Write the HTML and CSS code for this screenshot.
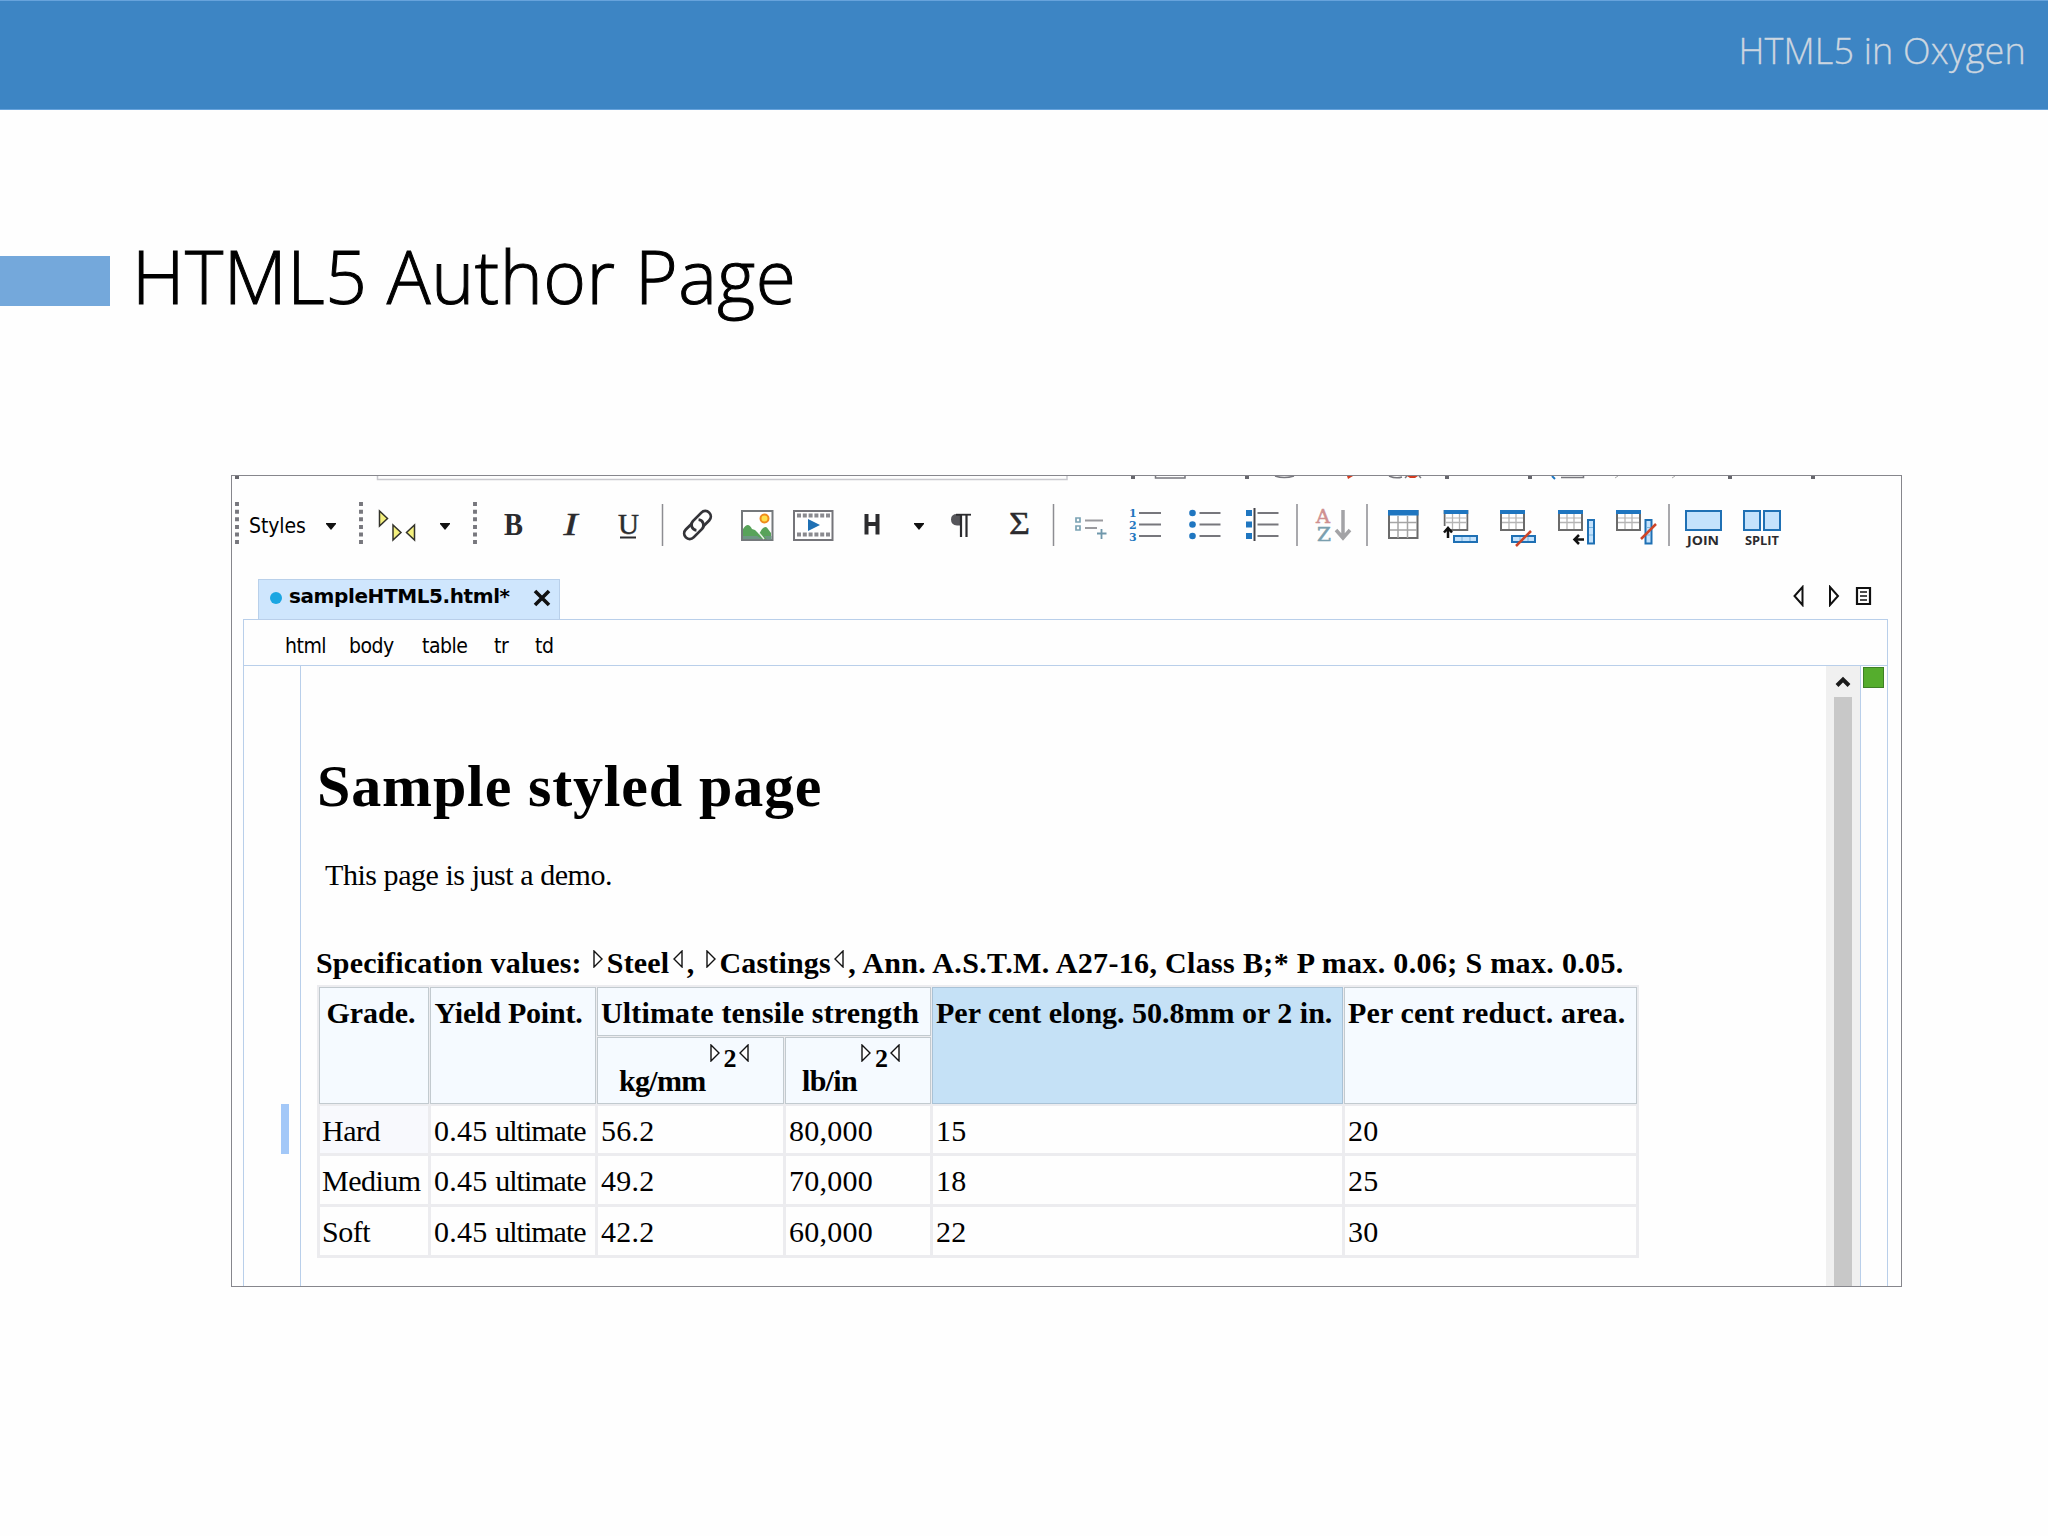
FILE: index.html
```html
<!DOCTYPE html>
<html lang="en">
<head>
    <meta charset="UTF-8">
    <title>HTML5 Author Page</title>
    <link rel="stylesheet" href="styles.css">
</head>
<body>

<header><span>HTML5 in Oxygen</span></header>

<div class="title">
    <div class="accent"></div>
    <h1>HTML5 Author Page</h1>
</div>

<!-- Symbols shared by the toolbar and the document -->
<svg class="defs">
    <symbol id="grip" viewBox="0 0 4 44"><path d="M0 2h4M0 10h4M0 17.700h4M0 25.500h4M0 33.200h4M0 41h4" stroke="#77777d" stroke-width="4"/></symbol>
    <symbol id="caret" viewBox="0 0 10 7"><path d="M0 0h10v1L5 7 0 1z" fill="#111"/></symbol>
    <symbol id="grid" viewBox="0 0 25 21">
        <path d="M1 1h23v19H1z" fill="#fff" stroke="#6b6b6b" stroke-width="2"/>
        <path d="M2 12.500h21M9 4v15M16 4v15" stroke="#b5b5b5" stroke-width="1.300" fill="none"/>
        <path d="M2 8h21" stroke="#b5b5b5"/>
        <path d="M0 0h25v4H0z" fill="#1f76c0"/>
    </symbol>
    <symbol id="open" viewBox="0 0 10 18"><path d="M1 1v16L9 9z" fill="#fff" stroke="#111" stroke-width="1.400"/></symbol>
    <symbol id="close" viewBox="0 0 10 18"><path d="M9 1v16L1 9z" fill="#fff" stroke="#111" stroke-width="1.400"/></symbol>
</svg>

<div class="window">
    <!-- Bottom edge of the toolbar row above -->
    <svg class="upper-row" width="1669" height="6" viewBox="232 476 1669 6">
        <path d="M377.500 476v3.500H1067V476" fill="none" stroke="#c9c9ce" stroke-width="1.500"/>
        <path d="M235 476h4v3h-4zM1131 476h4v3h-4zM1245 476h4v3h-4zM1445 476h4v3h-4zM1528 476h4v3h-4zM1728 476h4v3h-4zM1811 476h4v3h-4z" fill="#66666c"/>
        <path d="M1155.500 476v2H1185v-2M1275 476q9 3 19 0M1389 476q7 3 13 1M1561 477.500h22.500V476M1405 478l2-2M1419 476l2 2" fill="none" stroke="#77777d" stroke-width="1.500"/>
        <path d="M1347 476h6l-5 3zM1407 476h11l-3 2h-5z" fill="#d23c20"/>
        <path d="M1552 476l3 3" stroke="#1f76c0" stroke-width="2"/>
        <path d="M1615 478l3-2M1672 478l3-2" stroke="#aaa"/>
    </svg>

    <div class="toolbar">
        <svg width="12" height="60" viewBox="232 496 12 60"><use href="#grip" x="235" y="502" width="4" height="43"/></svg>
        <span class="styles">Styles</span>
        <svg width="36" height="60" viewBox="316 496 36 60"><use href="#caret" x="326" y="523" width="10" height="7"/></svg>
        <svg width="18" height="60" viewBox="352 496 18 60"><use href="#grip" x="359" y="502" width="4" height="43"/></svg>
        <svg width="60" height="60" viewBox="370 496 60 60">
            <path d="M379.500 511v15l8-7.500zM393 525v15l8-7.500zM414.500 525v15l-8-7.500z" fill="#f4f07e" stroke="#33332b" stroke-width="1.500"/>
        </svg>
        <svg width="36" height="60" viewBox="430 496 36 60"><use href="#caret" x="440" y="523" width="10" height="7"/></svg>
        <svg width="24" height="60" viewBox="466 496 24 60"><use href="#grip" x="473" y="502" width="4" height="43"/></svg>
        <svg width="50" height="60" viewBox="490 496 50 60"><text class="serif bold" x="504" y="534.500" font-size="31" textLength="19" lengthAdjust="spacingAndGlyphs">B</text></svg>
        <svg width="60" height="60" viewBox="540 496 60 60"><text class="serif italic" x="563.500" y="534.500" font-size="31" textLength="14" lengthAdjust="spacingAndGlyphs" stroke="#2b2b2e" stroke-width=".5">I</text></svg>
        <svg width="55" height="60" viewBox="600 496 55 60">
            <text class="serif" x="618" y="533.500" font-size="29" stroke="#2b2b2e" stroke-width=".5">U</text>
            <path d="M620 537.500h16" stroke="#2b2b2e" stroke-width="2"/>
        </svg>
        <svg width="15" height="60" viewBox="655 496 15 60"><path class="sep" d="M662.500 504v42"/></svg>
        <svg width="57" height="60" viewBox="670 496 57 60">
            <g transform="rotate(-45 697.500 525)" fill="none" stroke="#333338" stroke-width="2.800">
                <path d="M700 530h9a5.500 5.500 0 0 0 0-11h-12a5.500 5.500 0 0 0-4 9"/>
                <path d="M695 520h-9a5.500 5.500 0 0 0 0 11h12a5.500 5.500 0 0 0 4-9"/>
            </g>
        </svg>
        <svg width="56" height="60" viewBox="727 496 56 60">
            <path d="M742 511h30.500v29H742z" fill="#fff" stroke="#75797c" stroke-width="2"/>
            <circle cx="764.500" cy="518.500" r="4" fill="#ffe04a" stroke="#ef8b1d" stroke-width="2"/>
            <path d="M743 529q5-8 9 0l3 1 4 4 3-5q4-4 6 0l3 4v6h-28z" fill="#58a35a"/>
            <path d="M743 536h14l5 3h-19zM764 536h7.500v3.500H767z" fill="#6d9783"/>
            <path d="M759 533l5 6" stroke="#e9f3e9" stroke-width="1.500"/>
        </svg>
        <svg width="65" height="60" viewBox="783 496 65 60">
            <path d="M794 511h38.500v29H794z" fill="#fff" stroke="#75757a" stroke-width="2"/>
            <path d="M797 515.500h33M797 534.500h33" stroke="#8a8a8f" stroke-width="4" stroke-dasharray="4 1.800"/>
            <path d="M808 519v12l12-6z" fill="#1f70b4"/>
        </svg>
        <svg width="52" height="60" viewBox="848 496 52 60"><path d="M866.500 514v20.500M877.500 514v20.500M866 524h12" stroke="#2b2b2e" stroke-width="4" fill="none"/></svg>
        <svg width="35" height="60" viewBox="900 496 35 60"><use href="#caret" x="914" y="523" width="10" height="7"/></svg>
        <svg width="55" height="60" viewBox="935 496 55 60">
            <path d="M961 514h-4q-6 0-6 5.500t6 6h4z" fill="#55555a"/>
            <path d="M956 514.700h15" stroke="#2b2b2e" stroke-width="1.800"/>
            <path d="M961 514v23M966.500 514v23" stroke="#2b2b2e" stroke-width="2.200"/>
        </svg>
        <svg width="55" height="60" viewBox="990 496 55 60"><text class="serif" x="1009" y="534" font-size="31" textLength="21" lengthAdjust="spacingAndGlyphs" stroke="#2b2b2e" stroke-width=".4">Σ</text></svg>
        <svg width="17" height="60" viewBox="1045 496 17 60"><path class="sep" d="M1053.500 504v42"/></svg>
        <svg width="56" height="60" viewBox="1062 496 56 60" fill="none">
            <path d="M1076 518h4v4h-4zM1076 526h4v4h-4z" stroke="#7ba3b4" stroke-width="1.700"/>
            <path d="M1085 520.500h18M1085 528h12" stroke="#9a9a9e" stroke-width="2"/>
            <path d="M1097 533.500h9.500M1101.500 529v10" stroke="#6f97ab" stroke-width="1.800"/>
        </svg>
        <svg width="57" height="60" viewBox="1118 496 57 60">
            <text class="nums" x="1129" y="517">1</text>
            <text class="nums" x="1129" y="529">2</text>
            <text class="nums" x="1129" y="541">3</text>
            <path class="lines" d="M1139 513h22M1139 524.500h22M1139 536h22"/>
        </svg>
        <svg width="58" height="60" viewBox="1175 496 58 60">
            <g fill="#1f76c0"><circle cx="1192.500" cy="513" r="3.300"/><circle cx="1192.500" cy="524.500" r="3.300"/><circle cx="1192.500" cy="536" r="3.300"/></g>
            <path class="lines" d="M1199.500 513h21M1199.500 524.500h21M1199.500 536h21"/>
        </svg>
        <svg width="57" height="60" viewBox="1233 496 57 60">
            <path d="M1246 510h6v6h-6zM1246 521.500h6v6h-6zM1246 533h6v6h-6z" fill="#1f76c0"/>
            <path d="M1254.500 508v33" stroke="#44444a" stroke-width="2"/>
            <path class="lines" d="M1257.500 513h21M1257.500 524.500h21M1257.500 536h21"/>
        </svg>
        <svg width="14" height="60" viewBox="1290 496 14 60"><path class="sep" d="M1297 504v42"/></svg>
        <svg width="56" height="60" viewBox="1304 496 56 60">
            <text class="az a" x="1316" y="522.500" textLength="14" lengthAdjust="spacingAndGlyphs">A</text>
            <text class="az z" x="1317" y="541" textLength="14" lengthAdjust="spacingAndGlyphs">Z</text>
            <path d="M1343 510v28M1336 530l7 8 7-8" fill="none" stroke="#a3a3a6" stroke-width="3.500"/>
        </svg>
        <svg width="15" height="60" viewBox="1360 496 15 60"><path class="sep" d="M1367 504v42"/></svg>
        <svg width="55" height="60" viewBox="1375 496 55 60">
            <path d="M1389 511h28.500v27H1389z" fill="#fff" stroke="#6b6b6b" stroke-width="2"/>
            <path d="M1390 522.500h27M1390 530h27M1398 516v22M1407.500 516v22" stroke="#a5a5a5" stroke-width="1.500"/>
            <path d="M1388 510h30.500v5.500H1388z" fill="#1f76c0"/>
        </svg>
        <svg width="58" height="60" viewBox="1430 496 58 60">
            <use href="#grid" x="1443.500" y="510" width="25" height="21"/>
            <path d="M1442 526h8v6h-8z" fill="#fff"/>
            <path d="M1448 538v-9M1444 532.500l4-4.500 4 4.500" fill="none" stroke="#111" stroke-width="2.500"/>
            <path class="cell" d="M1454 536h23v6h-23z"/><path d="M1462 537v4M1470 537v4" stroke="#78b3dc"/>
        </svg>
        <svg width="58" height="60" viewBox="1488 496 58 60">
            <use href="#grid" x="1500" y="510" width="25" height="21"/>
            <path class="cell" d="M1512 536h23v6h-23z"/><path d="M1520 537v4M1528 537v4" stroke="#78b3dc"/>
            <path class="strike" d="M1516 546l15-15"/>
        </svg>
        <svg width="58" height="60" viewBox="1546 496 58 60">
            <use href="#grid" x="1558" y="510" width="25" height="21"/>
            <path class="cell" d="M1588 520h6v23.500h-6z"/><path d="M1589 527.500h4M1589 535h4" stroke="#78b3dc"/>
            <path d="M1584 539.500h-9M1579 535l-4.500 4.500 4.500 4.500" fill="none" stroke="#111" stroke-width="2.500"/>
        </svg>
        <svg width="58" height="60" viewBox="1604 496 58 60">
            <use href="#grid" x="1616" y="510" width="25" height="21"/>
            <path class="cell" d="M1645.500 520h6v23.500h-6z"/><path d="M1646.500 527.500h4M1646.500 535h4" stroke="#78b3dc"/>
            <path class="strike" d="M1641 539l15-15"/>
        </svg>
        <svg width="14" height="60" viewBox="1662 496 14 60"><path class="sep" d="M1669 504v42"/></svg>
        <svg width="56" height="60" viewBox="1676 496 56 60">
            <path class="cell" d="M1686 511h35v19h-35z"/>
            <text class="label" x="1687" y="544.500" textLength="32" lengthAdjust="spacingAndGlyphs">JOIN</text>
        </svg>
        <svg width="60" height="60" viewBox="1732 496 60 60">
            <path class="cell" d="M1744 511h16v19h-16zM1764 511h16v19h-16z"/>
            <text class="label" x="1745" y="544.500" textLength="34" lengthAdjust="spacingAndGlyphs">SPLIT</text>
        </svg>
    </div>

    <div class="tabs">
        <div class="tab">
            <span class="dot"></span>
            <span class="file">sampleHTML5.html*</span>
            <svg width="18" height="18" viewBox="0 0 18 18"><path d="M2 2l14 14M16 2L2 16" stroke="#111" stroke-width="3.600"/></svg>
        </div>
        <svg class="tab-nav" width="80" height="22" viewBox="1793 585 80 22" fill="none" stroke="#111">
            <path d="M1802.500 587v18l-8-9zM1830 587v18l8-9z" stroke-width="2"/>
            <path d="M1857 588h13v16h-13z" stroke-width="2.200"/>
            <path d="M1860 592h7M1860 596h7M1860 600h7" stroke-width="1.700"/>
        </svg>
    </div>

    <div class="editor">
        <nav class="breadcrumb">
            <span class="w1">html</span><span class="w2">body</span><span class="w3">table</span><span class="w4">tr</span><span>td</span>
        </nav>
        <div class="pane">
            <div class="gutter"><div class="change"></div></div>
            <div class="document">
                <h2>Sample styled page</h2>
                <p>This page is just a demo.</p>
                <table>
                    <caption>Specification values: <svg class="tag"><use href="#open"/></svg>Steel<svg class="tag"><use href="#close"/></svg>, <svg class="tag"><use href="#open"/></svg>Castings<svg class="tag"><use href="#close"/></svg><span class="spec">, Ann. A.S.T.M. A27-16, Class B;* P max. 0.06; S max. 0.05.</span></caption>
                    <colgroup><col class="c1"><col class="c2"><col class="c3"><col class="c4"><col class="c5"><col class="c6"></colgroup>
                    <thead>
                        <tr class="h1">
                            <th rowspan="2" class="grade">Grade.</th>
                            <th rowspan="2" class="yield">Yield Point.</th>
                            <th colspan="2" class="left wide">Ultimate tensile strength</th>
                            <th rowspan="2" class="left selected">Per cent elong. 50.8mm or 2 in.</th>
                            <th rowspan="2" class="left wide">Per cent reduct. area.</th>
                        </tr>
                        <tr class="h2">
                            <th class="unit kg"><span>kg/mm</span><sup><svg class="tag"><use href="#open"/></svg>2<svg class="tag"><use href="#close"/></svg></sup></th>
                            <th class="unit lb"><span>lb/in</span><sup><svg class="tag"><use href="#open"/></svg>2<svg class="tag"><use href="#close"/></svg></sup></th>
                        </tr>
                    </thead>
                    <tbody>
                        <tr class="first"><td class="name current">Hard</td><td>0.45 <span class="word">ultimate</span></td><td>56.2</td><td>80,000</td><td>15</td><td>20</td></tr>
                        <tr><td class="name">Medium</td><td>0.45 <span class="word">ultimate</span></td><td>49.2</td><td>70,000</td><td>18</td><td>25</td></tr>
                        <tr><td class="name">Soft</td><td>0.45 <span class="word">ultimate</span></td><td>42.2</td><td>60,000</td><td>22</td><td>30</td></tr>
                    </tbody>
                </table>
            </div>
            <div class="scrollbar">
                <svg width="16" height="12" viewBox="0 0 16 12"><path d="M2 10.500l6-6 6 6" fill="none" stroke="#1b1b1b" stroke-width="4"/></svg>
                <div class="thumb"></div>
            </div>
            <div class="status"><div class="valid"></div></div>
        </div>
    </div>
</div>

</body>
</html>
```
FILE: styles.css
```css
* {
    box-sizing: border-box;
}

body {
    margin: 0;
    width: 2048px;
    height: 1536px;
    overflow: hidden;
    background: #fefefe;
    color: #000;
    font-family: "Open Sans", sans-serif;
}

svg {
    display: block;
    flex: none;
}

.defs {
    position: absolute;
    width: 0;
    height: 0;
}

header {
    height: 110px;
    padding: 24px 22px 0 0;
    background: #3d85c4;
    border-top: 1px solid #67a3dc;
    border-bottom: 1px solid #67a3dc;
    color: #ccd6e0;
    font-size: 36px;
    font-weight: 300;
    line-height: 52px;
    text-align: right;
}

header span {
    letter-spacing: 0.2px;
    -webkit-text-stroke: 0.3px #ccd6e0;
}

.title {
    display: flex;
    height: 365px;
    padding-top: 146px;
}

.accent {
    width: 110px;
    height: 50px;
    background: #74a8db;
}

.title h1 {
    margin: -30px 0 0 22px;
    font-size: 73px;
    font-weight: 300;
    line-height: 100px;
    letter-spacing: 0.5px;
    white-space: nowrap;
    -webkit-text-stroke: 1px #000;
}

.window {
    width: 1671px;
    height: 812px;
    margin-left: 231px;
    border: 1px solid #86868c;
    overflow: hidden;
    font-family: "DejaVu Sans Condensed", "DejaVu Sans", sans-serif;
    font-stretch: condensed;
}

.upper-row {
    height: 6px;
}

.toolbar {
    display: flex;
    height: 60px;
    margin-top: 14px;
}

.styles {
    width: 72px;
    padding-left: 5px;
    font-size: 21px;
    line-height: 60px;
    letter-spacing: -0.1px;
}

.toolbar text {
    fill: #2b2b2e;
}

.serif {
    font-family: "Liberation Serif", serif;
}

.bold {
    font-weight: bold;
}

.italic {
    font-style: italic;
}

.sep {
    stroke: #8d8d92;
    stroke-width: 1.500;
}

.lines {
    stroke: #77777c;
    stroke-width: 2;
}

.toolbar .nums {
    fill: #1f76c0;
    font: bold 11px "DejaVu Serif", "DejaVu Sans", serif;
}

.az {
    font: 18px "DejaVu Serif", "Liberation Serif", serif;
    stroke-width: 0.5;
}

.toolbar .a {
    fill: #cf9090;
    stroke: #cf9090;
}

.toolbar .z {
    fill: #7b9fae;
    stroke: #7b9fae;
}

.cell {
    fill: #c4e2fc;
    stroke: #1f70b4;
    stroke-width: 2;
}

.strike {
    stroke: #cd4527;
    stroke-width: 2.500;
}

.label {
    font: bold 13px "Open Sans", sans-serif;
}

.tabs {
    display: flex;
    justify-content: space-between;
    height: 63px;
    padding: 23px 28px 0 26px;
}

.tab {
    display: flex;
    align-items: center;
    width: 302px;
    height: 40px;
    padding: 0 8px 3px 11px;
    background: #cfe6fd;
    border: 1px solid #b9d0ea;
    border-bottom: 0;
}

.dot {
    width: 12px;
    height: 12px;
    border-radius: 50%;
    background: #1ba6e2;
}

.file {
    flex: 1;
    margin-left: 7px;
    padding-bottom: 4px;
    font-family: "DejaVu Sans", sans-serif;
    font-size: 20px;
    font-stretch: normal;
    font-weight: bold;
    letter-spacing: -0.400px;
}

.tab-nav {
    margin-top: 6px;
}

.editor {
    width: 1645px;
    height: 680px;
    margin-left: 11px;
    border: 1.500px solid #b9cfea;
}

.breadcrumb {
    display: flex;
    height: 46px;
    padding-left: 41px;
    border-bottom: 1.500px solid #b9cfea;
    font-size: 21px;
    line-height: 52px;
    letter-spacing: -0.500px;
}

.w1 { width: 64px; }
.w2 { width: 73px; }
.w3 { width: 72px; }
.w4 { width: 41px; }

.pane {
    display: flex;
    height: 633px;
}

.gutter {
    width: 57px;
    padding: 438px 0 0 37px;
    border-right: 1.500px solid #b9cfea;
}

.change {
    width: 8px;
    height: 50px;
    background: #a3c8f8;
}

.document {
    width: 1525px;
    padding-left: 16px;
    font-family: "Liberation Serif", serif;
    font-size: 30px;
}

.document h2 {
    margin: 85px 0 0;
    font-size: 60px;
    line-height: 70px;
    letter-spacing: 0.850px;
}

.document p {
    margin: 34px 0 0 8px;
    line-height: 40px;
    letter-spacing: -0.450px;
}

table {
    width: 1321px;
    margin-top: 42px;
    table-layout: fixed;
    border: 1px solid #ececef;
    border-collapse: separate;
    border-spacing: 1px;
    background: #ececef;
}

caption {
    height: 48px;
    margin-left: -1px;
    padding-top: 4px;
    font-weight: bold;
    line-height: 44px;
    letter-spacing: 0.150px;
    text-align: left;
    white-space: nowrap;
}

.spec {
    letter-spacing: 0.340px;
}

.tag {
    display: inline-block;
    width: 10px;
    height: 18px;
    margin: 0 4px 0 3.500px;
    vertical-align: 5px;
}

.c1 { width: 110px; }
.c2 { width: 166px; }
.c3 { width: 187px; }
.c4 { width: 146px; }
.c5 { width: 411px; }
.c6 { width: 293px; }

th {
    padding: 6px 0 0;
    background: #f5faff;
    border: 1px solid #c2cacf;
    line-height: 38px;
    text-align: center;
    vertical-align: top;
    white-space: nowrap;
}

th.left {
    padding-left: 3px;
    text-align: left;
}

th.wide {
    letter-spacing: 0.150px;
}

th.grade {
    padding-right: 6px;
}

th.yield {
    padding-right: 9px;
    letter-spacing: -0.200px;
}

th.selected {
    background: #c5e1f6;
    border-color: #a9c2d6;
}

.h1 {
    height: 49px;
}

.h2 {
    height: 67px;
}

.unit {
    padding: 0;
    text-align: left;
    letter-spacing: -0.7px;
}

.unit.kg {
    padding-left: 21px;
}

.unit.lb {
    padding-left: 16px;
}

.unit span {
    display: inline-block;
    padding-top: 24px;
}

sup {
    margin-left: 1px;
    font-size: 26px;
    line-height: 0;
    vertical-align: 24px;
}

sup .tag {
    margin: 0 4px 0 3px;
}

td {
    height: 50px;
    padding: 2px 0 0 3px;
    background: #fefefe;
    border: 1px solid #ececef;
    line-height: 40px;
    letter-spacing: 0.250px;
    white-space: nowrap;
}

.first td {
    height: 49px;
}

.word {
    letter-spacing: -1px;
}

td.name {
    padding-left: 2px;
    letter-spacing: -0.500px;
}

.current {
    background: #f8f9fd;
}

.scrollbar {
    display: flex;
    flex-direction: column;
    align-items: center;
    width: 35px;
    padding-top: 9px;
    background: #f0f0f0;
    border-right: 1.500px solid #b9cfea;
}

.thumb {
    flex: 1;
    width: 18px;
    margin-top: 10px;
    background: #c8c8c8;
}

.status {
    padding: 1px 0 0 2px;
}

.valid {
    width: 21px;
    height: 21px;
    background: #55ad2d;
    border: 1px solid #3e8026;
}
```
